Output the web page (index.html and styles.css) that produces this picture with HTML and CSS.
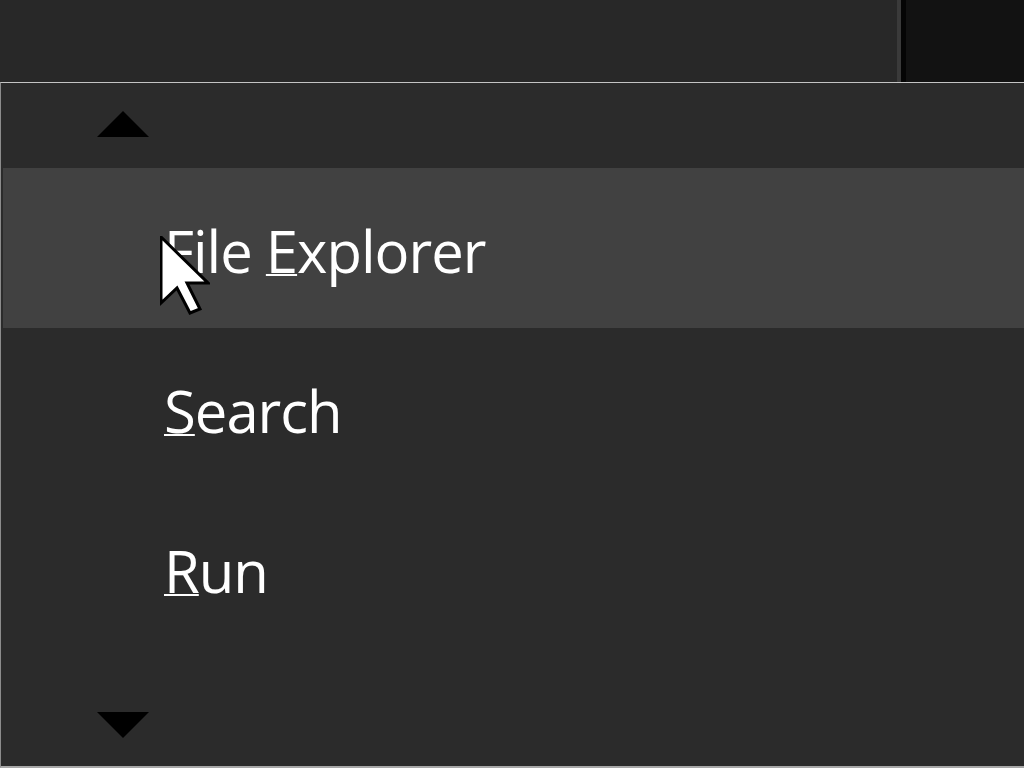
FILE: index.html
```html
<!DOCTYPE html>
<html>
<head>
<meta charset="utf-8">
<link rel="stylesheet" href="styles.css">
</head>
<body>
<div class="topbar">
  <div class="top-left"></div>
  <div class="sep-light"></div>
  <div class="sep-dark"></div>
  <div class="top-right"></div>
</div>
<div class="menu">
  <div class="scroll up">
    <svg width="52" height="27" viewBox="0 0 52 27"><polygon points="0,26 26,0 52,26" fill="#000"/></svg>
  </div>
  <div class="item active"><span>File <u>E</u>xplorer</span></div>
  <div class="item"><span><u>S</u>earch</span></div>
  <div class="item"><span><u>R</u>un</span></div>
  <div class="scroll down">
    <svg width="52" height="27" viewBox="0 0 52 27"><polygon points="0,0 52,0 26,26" fill="#000"/></svg>
  </div>
  <svg class="cursor" width="50" height="80" viewBox="-1 -1 50 80"><polygon points="0,0 0,66 16,51 29,76 39,72 26,46 47,46" fill="#fff" stroke="#000" stroke-width="3" stroke-linejoin="miter"/></svg>
</div>
</body>
</html>
```
FILE: styles.css
```css
html, body {
  margin: 0;
  padding: 0;
  background: #282828;
  width: 1024px;
  height: 768px;
  overflow: hidden;
  font-family: "Open Sans", "Noto Sans", sans-serif;
}
.topbar {
  display: flex;
  height: 82px;
}
.top-left {
  width: 897px;
  background: #282828;
}
.sep-light {
  width: 4px;
  background: #3a3a3a;
}
.sep-dark {
  width: 5px;
  background: #050505;
}
.top-right {
  flex: 1;
  background: #121212;
}
.menu {
  position: relative;
  height: 683px;
  border-top: 1px solid #c4c4c4;
  border-bottom: 2px solid #a8a8a8;
  border-left: 1px solid #8c8c8c;
  padding-left: 2px;
  background: #2b2b2b;
  display: flex;
  flex-direction: column;
}
.scroll {
  display: flex;
  padding-left: 94px;
}
.scroll svg { display: block; }
.up {
  height: 85px;
  padding-top: 28px;
  box-sizing: border-box;
}
.down {
  flex: 1;
  padding-top: 64px;
  box-sizing: border-box;
}
.item {
  height: 160px;
  display: flex;
  align-items: center;
  padding-left: 161px;
  padding-top: 4px;
  box-sizing: border-box;
  color: #ffffff;
  font-size: 58px;
  letter-spacing: -1px;
  white-space: nowrap;
}
.item.active {
  background: #414141;
}
.item u {
  text-decoration-thickness: 2px;
  text-underline-offset: 1px;
}
.cursor {
  position: absolute;
  left: 159px;
  top: 153px;
}
```
